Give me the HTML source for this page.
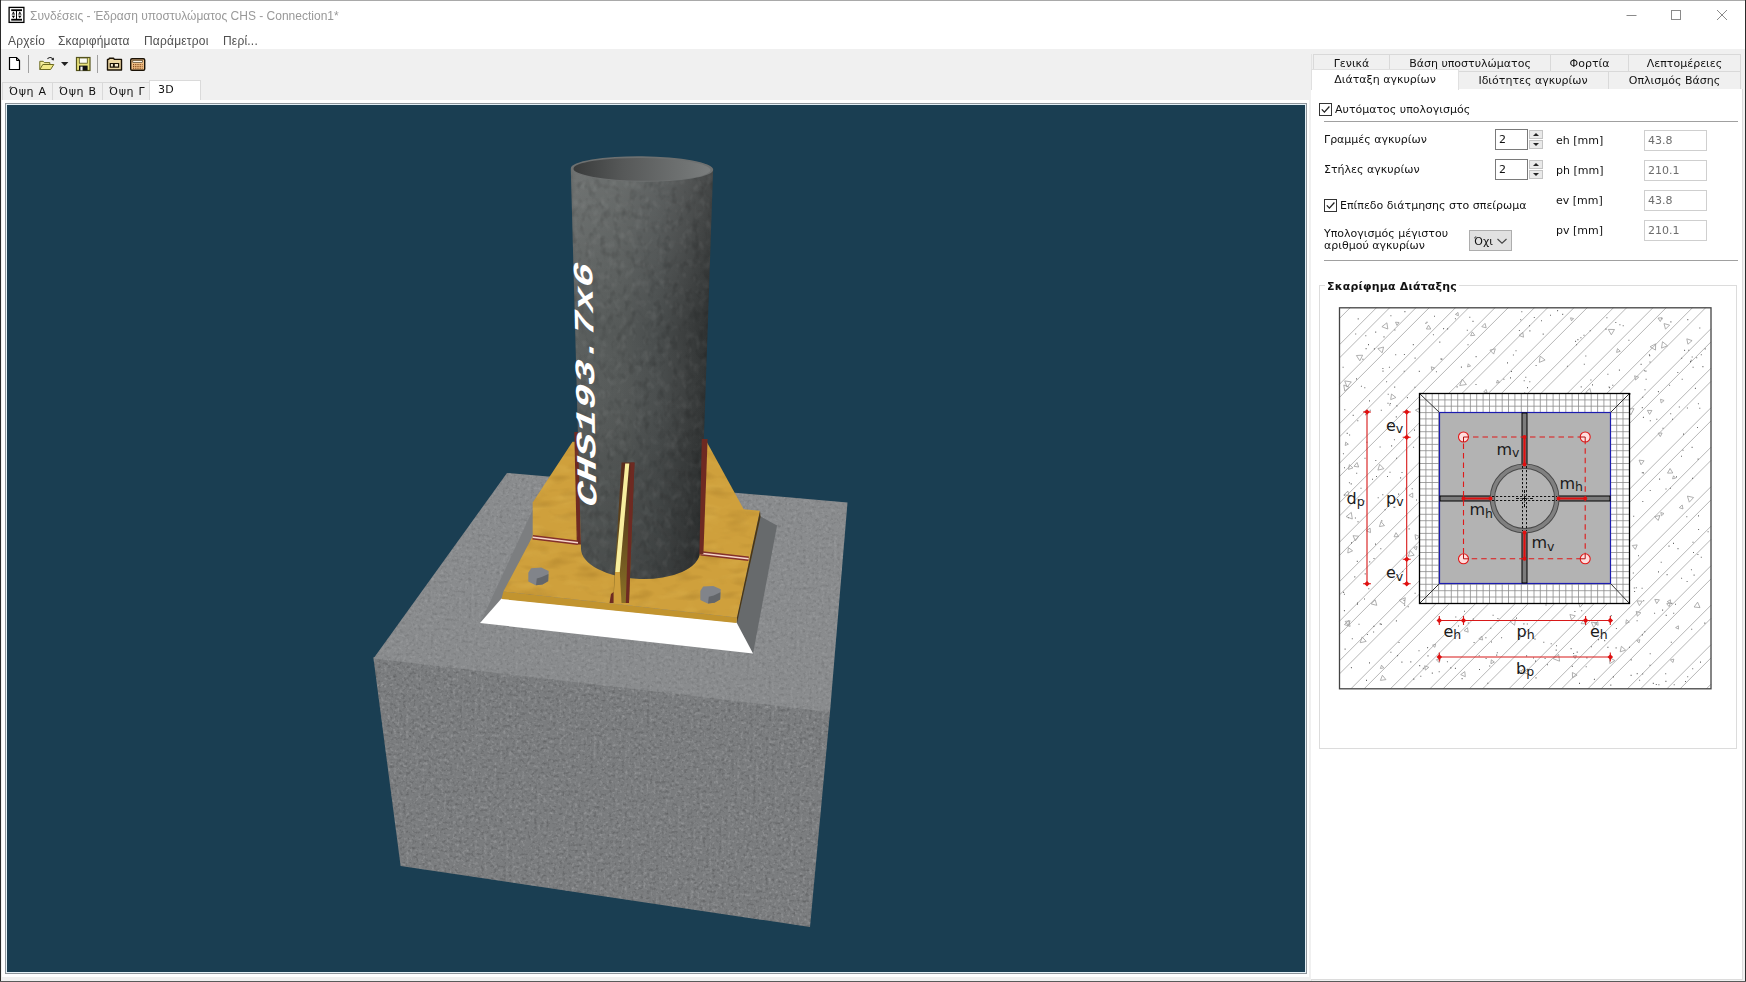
<!DOCTYPE html>
<html lang="el"><head><meta charset="utf-8"><title>Συνδέσεις</title>
<style>
html,body{margin:0;padding:0}
body{width:1746px;height:982px;overflow:hidden;position:relative;background:#f0f0f0;
 font-family:"DejaVu Sans","Liberation Sans",sans-serif;font-size:11px;color:#111}
.abs{position:absolute}
#win-top{position:absolute;left:0;top:0;width:1746px;height:49px;background:#fff}
#bt{position:absolute;left:0;top:0;width:1746px;height:1px;background:#a9a9a9}
#bl{position:absolute;left:0;top:0;width:1px;height:982px;background:#2b2b2b}
#br{position:absolute;left:1745px;top:0;width:1px;height:982px;background:#2b2b2b}
#bb{position:absolute;left:0;top:981px;width:1746px;height:1px;background:#5a5a5a}
#title{position:absolute;left:30px;top:9px;font-family:"Liberation Sans","DejaVu Sans",sans-serif;font-size:12px;line-height:14px;color:#999;white-space:nowrap;letter-spacing:0}
.menu{position:absolute;top:34px;font-family:"Liberation Sans","DejaVu Sans",sans-serif;font-size:12px;line-height:14px;color:#505050;white-space:nowrap;letter-spacing:0.2px}
.tsep{position:absolute;top:55px;width:1px;height:18px;background:#a0a0a0}
.ltab{position:absolute;top:82px;height:18px;box-sizing:border-box;border:1px solid #d9d9d9;border-bottom:none;background:#f0f0f0;font-size:11px;line-height:16px;white-space:nowrap;padding:1px 0 0 6px;letter-spacing:0.7px}
.ltab.sel{top:80px;height:20px;background:#fff;border-color:#dadada;line-height:17px;padding-top:0}
#lpage{position:absolute;left:2px;top:100px;width:1307px;height:877px;background:#fff}
#view{position:absolute;left:5px;top:103px;width:1302px;height:871px;box-sizing:border-box;border:1px solid #8f969c;background:#e4f0f6}
#view svg{position:absolute;left:1px;top:1px}
/* right panel */
#rpage{position:absolute;left:1311px;top:89px;width:432px;height:891px;background:#fff}
.rtab{position:absolute;height:18px;box-sizing:border-box;border:1px solid #d9d9d9;border-bottom:none;background:#f0f0f0;font-size:11px;line-height:16px;text-align:center;white-space:nowrap}
.lbl{position:absolute;white-space:nowrap;font-size:11px;line-height:13px}
.hr{position:absolute;left:1324px;width:414px;height:1px;background:#a0a0a0}
.spin{position:absolute;left:1495px;width:33px;height:21px;box-sizing:border-box;border:1px solid #7a7a7a;background:#fff;font-size:11px;line-height:18px;padding:1px 0 0 3px}
.sbtn{position:absolute;left:1529px;width:14px;height:9px;box-sizing:border-box;border:1px solid #c3c3c3;background:#e9e9e9}
.sbtn i{position:absolute;left:3px;top:2px;width:0;height:0;border-left:3px solid transparent;border-right:3px solid transparent}
.sbtn.up i{border-bottom:3px solid #222}
.sbtn.dn i{border-top:3px solid #222}
.ro{position:absolute;left:1644px;width:63px;height:21px;box-sizing:border-box;border:1px solid #cfcfcf;background:#fff;color:#6d6d6d;font-size:11px;line-height:18px;padding:1px 0 0 3px}
.cb{position:absolute;width:13px;height:13px;box-sizing:border-box;border:1px solid #333;background:#fff}
.cb svg{position:absolute;left:0;top:0}

#title,.menu,.ltab,.rtab,.lbl,.spin,.ro,.combo{will-change:transform}

</style></head><body>
<div id="win-top"></div>
<!-- app icon -->
<svg class="abs" style="left:8px;top:6px" width="18" height="18" viewBox="0 0 18 18">
 <rect x="1.1" y="1.4" width="14.8" height="15" fill="#fff" stroke="#000" stroke-width="1.3"/>
 <rect x="3.2" y="3.3" width="10.8" height="1.8" fill="#000"/>
 <rect x="3.2" y="12.8" width="10.8" height="1.8" fill="#000"/>
 <rect x="8" y="5" width="1" height="8" fill="#000"/>
 <path d="M5.4 5.6l1.5 2.2h-3zM5.4 12.2l1.5-2.2h-3zM11.8 5.6l1.5 2.2h-3zM11.8 12.2l1.5-2.2h-3z" fill="#000"/>
 <path d="M3.7 8.9h3.3M10.2 8.9h3.3" stroke="#000" stroke-width="0.8"/>
</svg>
<div id="title">Συνδέσεις - Έδραση υποστυλώματος CHS - Connection1*</div>
<!-- window buttons -->
<svg class="abs" style="left:1610px;top:0" width="136" height="30" viewBox="0 0 136 30">
 <path d="M16.5 15.5h10" stroke="#8a8a8a" stroke-width="1" fill="none"/>
 <rect x="61.5" y="10.5" width="9" height="9" stroke="#8a8a8a" stroke-width="1" fill="none"/>
 <path d="M107 10l10 10M117 10l-10 10" stroke="#8a8a8a" stroke-width="1" fill="none"/>
</svg>
<div class="menu" style="left:8px">Αρχείο</div>
<div class="menu" style="left:58px">Σκαριφήματα</div>
<div class="menu" style="left:144px">Παράμετροι</div>
<div class="menu" style="left:223px">Περί...</div>
<!-- toolbar -->
<svg class="abs" style="left:0;top:52px" width="160" height="24" viewBox="0 52 160 24">
 <!-- new -->
 <path d="M9.5 57.5h7l3 3v9h-10z" fill="#fff" stroke="#000" stroke-width="1.2"/>
 <path d="M16.5 57.5v3h3" fill="none" stroke="#000" stroke-width="1"/>
 <!-- open -->
 <path d="M39.8 69.5v-8.2h3.4l1.2 1.3h5.4v2" fill="#f4ee9a" stroke="#6b6a20" stroke-width="1"/>
 <path d="M39.8 69.5l3-5h11l-3.2 5z" fill="#f1e987" stroke="#6b6a20" stroke-width="1"/>
 <path d="M47.5 58.8c1.5-1.8 4-1.8 5.2 0.3" fill="none" stroke="#222" stroke-width="1.1"/>
 <path d="M51.2 59.8l2.6 0.6 0.2-2.8z" fill="#222"/>
 <!-- dropdown arrow -->
 <path d="M61 62h7.4l-3.7 4z" fill="#222"/>
 <!-- save -->
 <rect x="76.5" y="57.5" width="13.5" height="13" fill="#e9e27c" stroke="#55541c" stroke-width="1.2"/>
 <rect x="79.3" y="58" width="8" height="5.2" fill="#fbfbf3" stroke="#55541c" stroke-width="0.8"/>
 <rect x="79" y="65.6" width="8.6" height="4.9" fill="#111"/>
 <rect x="80.4" y="66.6" width="2.2" height="3.9" fill="#f4f4f4"/>
 <!-- folder db -->
 <path d="M107.5 70v-10.6h1.2l0.8-1.2h4l0.8 1.2h7.2v10.6z" fill="#ecd6a2" stroke="#1a1206" stroke-width="1.4" stroke-linejoin="round"/>
 <path d="M110.3 63.5h3.2v3.6h-3.2zM114.2 63.5h4.4v3.6h-4.4z" fill="#f6ead0" stroke="#1a1206" stroke-width="1.2"/>
 <!-- calculator -->
 <rect x="130.7" y="58.8" width="14" height="11.5" rx="1.3" fill="#f0bf86" stroke="#1a1206" stroke-width="1.4"/>
 <rect x="132.8" y="60.6" width="9.8" height="2" fill="#fdf4e6" stroke="#3a2a10" stroke-width="0.6"/>
 <path d="M133 64.6h9.6M133 66.4h9.6M133 68.2h9.6" stroke="#7a3d10" stroke-width="1" stroke-dasharray="1.2 1"/>
</svg>
<div class="tsep" style="left:28px"></div>
<div class="tsep" style="left:97px"></div>
<!-- left tabs -->
<div id="lpage"></div>
<div class="ltab" style="left:2px;width:51px">Όψη Α</div>
<div class="ltab" style="left:52px;width:51px">Όψη Β</div>
<div class="ltab" style="left:102px;width:48px">Όψη Γ</div>
<div class="ltab sel" style="left:149px;width:52px;padding-left:8px;letter-spacing:0.2px">3D</div>

<div id="view">
<svg width="1298" height="867" viewBox="7 105 1298 867">
<defs>
 <linearGradient id="cyl" x1="571" y1="0" x2="713" y2="0" gradientUnits="userSpaceOnUse">
  <stop offset="0" stop-color="#525655"/>
  <stop offset="0.04" stop-color="#5b5f5e"/>
  <stop offset="0.35" stop-color="#545857"/>
  <stop offset="0.6" stop-color="#494d4d"/>
  <stop offset="0.8" stop-color="#3c3f3f"/>
  <stop offset="0.93" stop-color="#313434"/>
  <stop offset="1" stop-color="#292c2c"/>
 </linearGradient>
 <linearGradient id="cylv" x1="0" y1="170" x2="0" y2="580" gradientUnits="userSpaceOnUse">
  <stop offset="0" stop-color="#fff" stop-opacity="0.13"/>
  <stop offset="0.4" stop-color="#fff" stop-opacity="0"/>
  <stop offset="0.7" stop-color="#000" stop-opacity="0.06"/><stop offset="1" stop-color="#000" stop-opacity="0.16"/>
 </linearGradient>
 <linearGradient id="cin" x1="575" y1="0" x2="710" y2="0" gradientUnits="userSpaceOnUse">
  <stop offset="0" stop-color="#3a3c3c"/>
  <stop offset="0.35" stop-color="#565858"/>
  <stop offset="0.8" stop-color="#6f7272"/>
  <stop offset="1" stop-color="#7b7e7e"/>
 </linearGradient>
 <linearGradient id="weld" x1="0" y1="0" x2="0" y2="1">
  <stop offset="0" stop-color="#7a2a20"/><stop offset="0.3" stop-color="#8a3428"/>
  <stop offset="0.42" stop-color="#f8ddd2"/><stop offset="0.6" stop-color="#f8ddd2"/>
  <stop offset="0.72" stop-color="#8a3428"/><stop offset="1" stop-color="#7a2a20"/>
 </linearGradient>
 <filter id="nzc" x="0" y="0" width="100%" height="100%" color-interpolation-filters="sRGB">
  <feTurbulence type="fractalNoise" baseFrequency="0.32" numOctaves="2" seed="3" result="n"/>
  <feColorMatrix in="n" type="matrix" values="0 0 0 0 1  0 0 0 0 1  0 0 0 0 1  0.9 0 0 0 -0.45" result="l"/>
  <feColorMatrix in="n" type="matrix" values="0 0 0 0 0  0 0 0 0 0  0 0 0 0 0  0 -0.9 0 0 0.45" result="d"/>
  <feMerge result="m"><feMergeNode in="l"/><feMergeNode in="d"/></feMerge>
  <feComposite operator="in" in="m" in2="SourceGraphic"/>
 </filter>
 <filter id="nzb" x="0" y="0" width="100%" height="100%" color-interpolation-filters="sRGB">
  <feTurbulence type="fractalNoise" baseFrequency="0.14 0.1" numOctaves="2" seed="11" result="n"/>
  <feColorMatrix in="n" type="matrix" values="0 0 0 0 1  0 0 0 0 1  0 0 0 0 1  0.18 0 0 0 -0.09" result="l"/>
  <feColorMatrix in="n" type="matrix" values="0 0 0 0 0  0 0 0 0 0  0 0 0 0 0  0 -0.38 0 0 0.19" result="d"/>
  <feMerge result="m"><feMergeNode in="l"/><feMergeNode in="d"/></feMerge>
  <feComposite operator="in" in="m" in2="SourceGraphic"/>
 </filter>
 <filter id="nzg" x="0" y="0" width="100%" height="100%" color-interpolation-filters="sRGB">
  <feTurbulence type="fractalNoise" baseFrequency="0.04 0.1" numOctaves="2" seed="5" result="n"/>
  <feColorMatrix in="n" type="matrix" values="0 0 0 0 1  0 0 0 0 0.9  0 0 0 0 0.5  0.3 0 0 0 -0.15" result="l"/>
  <feColorMatrix in="n" type="matrix" values="0 0 0 0 0.35  0 0 0 0 0.2  0 0 0 0 0  0 -0.42 0 0 0.21" result="d"/>
  <feMerge result="m"><feMergeNode in="l"/><feMergeNode in="d"/></feMerge>
  <feComposite operator="in" in="m" in2="SourceGraphic"/>
 </filter>
 <linearGradient id="fs" x1="0" y1="462" x2="0" y2="603" gradientUnits="userSpaceOnUse">
  <stop offset="0" stop-color="#5a2a1c"/><stop offset="0.4" stop-color="#5c431c"/><stop offset="1" stop-color="#8a7026"/>
 </linearGradient>
</defs>
<rect x="7" y="105" width="1298" height="867" fill="#1a3e52"/>
<!-- concrete block -->
<polygon points="373.5,657 830,710.5 830,712 810,927 400.6,866 373.5,658.5" fill="#7b7d7f"/>
<polygon points="507,473 847.5,502.5 830,712 373.5,658.5" fill="#8a8c8e"/>
<g filter="url(#nzc)"><polygon points="507,473 847.5,502.5 830,712 373.5,658.5" fill="#fff" opacity="0.35"/><polygon points="373.5,658.5 830,712 810,927 400.6,866" fill="#fff" opacity="0.55"/></g>
<!-- grout -->
<polygon points="480,623.5 542,490 556,492 502.5,599" fill="#7c7e80"/>
<polygon points="760,516 777,525.6 753,653.6 736.5,622.5" fill="#676a6c"/>
<polygon points="501.5,598.5 736.5,622.5 753,653.6 480,623" fill="#ffffff"/>
<!-- base plate -->
<polygon points="556,492 760,510.8 737,617.4 503.4,591.6" fill="#cfa03c"/>
<polygon points="503.4,591.6 737,617.4 736.5,623 501.5,599" fill="#c2942f"/>
<polygon points="760,510.8 760.5,517 737,623 737,617.4" fill="#4a3614"/>
<g filter="url(#nzg)"><polygon points="556,492 760,510.8 737,617.4 503.4,591.6" fill="#fff"/></g>
<!-- left stiffener -->
<polygon points="572.5,441.7 532.7,502.6 532.7,536.6 578,543 578,441.7" fill="#cfa03c"/>
<polygon points="574.3,432 578.6,432 581,544.5 576.8,544.5" fill="#6e2a22"/>
<!-- right stiffener -->
<polygon points="706,440.5 750,520.8 748.4,558.6 701,553.5 703,440.5" fill="#cfa03c"/>
<g filter="url(#nzg)"><polygon points="572.5,441.7 532.7,502.6 532.7,536.6 578,543 578,441.7" fill="#fff"/><polygon points="706,440.5 750,520.8 748.4,558.6 701,553.5 703,440.5" fill="#fff"/></g>
<path d="M532.7 537.2L578 542.8" stroke="#83302a" stroke-width="4.6" fill="none"/><path d="M532.7 537.2L578 542.8" stroke="#f6d6cc" stroke-width="1.5" fill="none"/>
<path d="M700.5 553.2L748.6 558.7" stroke="#83302a" stroke-width="4.6" fill="none"/><path d="M700.5 553.2L748.6 558.7" stroke="#f6d6cc" stroke-width="1.5" fill="none"/>
<!-- cylinder -->
<path d="M570.8 169 L581 548 A59.5 29 2 0 0 700 552 L713.1 170.5 A71.2 12.6 0 0 0 570.8 169Z" fill="url(#cyl)"/>
<path d="M570.8 169 L581 548 A59.5 29 2 0 0 700 552 L713.1 170.5 A71.2 12.6 0 0 0 570.8 169Z" fill="url(#cylv)"/>
<g filter="url(#nzb)"><path d="M570.8 169 L581 548 A59.5 29 2 0 0 700 552 L713.1 170.5 A71.2 12.6 0 0 0 570.8 169Z" fill="#fff"/></g>
<ellipse cx="642" cy="169" rx="71.2" ry="12.8" fill="#6d7070" transform="rotate(0.6 642 169)"/>
<ellipse cx="642" cy="169.4" rx="68.5" ry="11.4" fill="url(#cin)" transform="rotate(0.6 642 169)"/>
<polygon points="701.8,439 707.6,439 703.4,554 699.4,554" fill="#6e2a22"/>
<!-- label -->
<text transform="translate(596.4,507.5) rotate(-91.0) skewX(-10) scale(1,0.685)" font-family="'Liberation Mono','DejaVu Sans Mono',monospace" font-weight="bold" font-style="italic" font-size="40.6" fill="#fff">CHS193.7x6</text>
<!-- front stiffener -->
<polygon points="621.5,462.5 634.5,462.5 629,603 613,603" fill="url(#fs)"/>
<polygon points="630.5,462.5 634.5,462.5 629,603 625.8,603" fill="#6e2a22"/>
<polygon points="625.2,463.5 629.3,463.5 619.8,572 615.2,572" fill="#f7ee9e"/>
<polygon points="615.2,572 619.8,572 621.5,603 613.2,603" fill="#cfa03c"/>
<polygon points="611,594 613.5,592 613.5,603 609.5,603" fill="#6e2a22"/>
<!-- bolts -->
<polygon points="700.3,591.0 703.1,586.5 713.3,585.9 720.7,589.3 720.2,599.1 714.5,602.8 707.6,603.6 700.3,599.9" fill="#81848a"/><polygon points="708.8,596.7 713.7,595.4 720.4,592.2 720.2,599.5 714.5,602.8 708.0,603.5" fill="#63666a"/>
<polygon points="528.3,572.7 531.1,568.2 541.3,567.6 548.7,571.0 548.2,580.8 542.5,584.5 535.6,585.3 528.3,581.6" fill="#81848a"/><polygon points="536.8,578.4 541.7,577.1 548.4,573.9 548.2,581.2 542.5,584.5 536.0,585.2" fill="#63666a"/>
</svg>

</div>
<!-- right panel -->
<div class="abs" style="left:1311px;top:54px;width:1px;height:927px;background:#e3e3e3"></div>
<div id="rpage"></div>
<div class="abs" style="left:1742px;top:89px;width:1px;height:891px;background:#dcdcdc"></div>
<div class="abs" style="left:1311px;top:979px;width:432px;height:1px;background:#dcdcdc"></div>
<div class="rtab" style="left:1313px;top:54px;width:77px;padding-top:1px">Γενικά</div>
<div class="rtab" style="left:1389px;top:54px;width:162px;padding-top:1px">Βάση υποστυλώματος</div>
<div class="rtab" style="left:1550px;top:54px;width:79px;padding-top:1px">Φορτία</div>
<div class="rtab" style="left:1628px;top:54px;width:113px;padding-top:1px">Λεπτομέρειες</div>
<div class="rtab" style="left:1457px;top:71px;width:152px;padding-top:1px">Ιδιότητες αγκυρίων</div>
<div class="rtab" style="left:1608px;top:71px;width:133px;padding-top:1px">Οπλισμός Βάσης</div>
<div class="rtab" style="left:1311px;top:69px;width:148px;height:21px;background:#fff;padding-top:2px;border-color:#e0e0e0">Διάταξη αγκυρίων</div>

<div class="cb" style="left:1319px;top:103px"><svg width="11" height="11" viewBox="0 0 11 11"><path d="M1.8 5.4l2.6 2.7 5-5.6" fill="none" stroke="#222" stroke-width="1.3"/></svg></div>
<div class="lbl" style="left:1335px;top:103px">Αυτόματος υπολογισμός</div>
<div class="hr" style="top:121px"></div>

<div class="lbl" style="left:1324px;top:133px">Γραμμές αγκυρίων</div>
<div class="spin" style="top:129px">2</div>
<div class="sbtn up" style="top:130px"><i></i></div>
<div class="sbtn dn" style="top:140px"><i></i></div>
<div class="lbl" style="left:1556px;top:134px">eh [mm]</div>
<div class="ro" style="top:130px">43.8</div>

<div class="lbl" style="left:1324px;top:163px">Στήλες αγκυρίων</div>
<div class="spin" style="top:159px">2</div>
<div class="sbtn up" style="top:160px"><i></i></div>
<div class="sbtn dn" style="top:170px"><i></i></div>
<div class="lbl" style="left:1556px;top:164px">ph [mm]</div>
<div class="ro" style="top:160px">210.1</div>

<div class="cb" style="left:1324px;top:199px"><svg width="11" height="11" viewBox="0 0 11 11"><path d="M1.8 5.4l2.6 2.7 5-5.6" fill="none" stroke="#222" stroke-width="1.3"/></svg></div>
<div class="lbl" style="left:1340px;top:199px">Επίπεδο διάτμησης στο σπείρωμα</div>
<div class="lbl" style="left:1556px;top:194px">ev [mm]</div>
<div class="ro" style="top:190px">43.8</div>

<div class="lbl" style="left:1324px;top:228px;line-height:12px">Υπολογισμός μέγιστου<br>αριθμού αγκυρίων</div>
<div class="abs combo" style="left:1469px;top:230px;width:43px;height:21px;box-sizing:border-box;border:1px solid #adadad;background:#e1e1e1;font-size:11px;line-height:18px;padding:2px 0 0 4px">Όχι</div>
<svg class="abs" style="left:1496px;top:236px" width="12" height="10" viewBox="0 0 12 10"><path d="M1.5 3l4.5 4.2 4.5-4.2" fill="none" stroke="#444" stroke-width="1.1"/></svg>
<div class="lbl" style="left:1556px;top:224px">pv [mm]</div>
<div class="ro" style="top:220px">210.1</div>
<div class="hr" style="top:260px"></div>

<!-- group box -->
<div class="abs" style="left:1319px;top:285px;width:418px;height:464px;box-sizing:border-box;border:1px solid #dcdcdc"></div>
<div class="lbl" style="left:1325px;top:280px;font-weight:bold;background:#fff;padding:0 2px;letter-spacing:0.18px">Σκαρίφημα Διάταξης</div>

<svg class="abs" style="left:1330px;top:300px" width="390" height="400" viewBox="1330 300 390 400" font-family="'DejaVu Sans','Liberation Sans',sans-serif">
 <rect x="1339.5" y="307.5" width="371.5" height="381.5" fill="#fff"/>
 <path d="M1350.4 307.5L1339.5 318.4M1376.7 307.5L1339.5 344.7M1389.9 307.5L1339.5 357.9M1416.2 307.5L1339.5 384.2M1429.4 307.5L1339.5 397.4M1455.7 307.5L1339.5 423.7M1468.9 307.5L1339.5 436.9M1495.2 307.5L1339.5 463.2M1508.4 307.5L1339.5 476.4M1534.7 307.5L1339.5 502.7M1547.9 307.5L1339.5 515.9M1574.2 307.5L1339.5 542.2M1587.4 307.5L1339.5 555.4M1613.7 307.5L1339.5 581.7M1626.9 307.5L1339.5 594.9M1653.2 307.5L1339.5 621.2M1666.4 307.5L1339.5 634.4M1692.7 307.5L1339.5 660.7M1705.9 307.5L1339.5 673.9M1350.7 689.0L1711.0 328.7M1363.9 689.0L1711.0 341.9M1390.2 689.0L1711.0 368.2M1403.4 689.0L1711.0 381.4M1429.7 689.0L1711.0 407.7M1442.9 689.0L1711.0 420.9M1469.2 689.0L1711.0 447.2M1482.4 689.0L1711.0 460.4M1508.7 689.0L1711.0 486.7M1521.9 689.0L1711.0 499.9M1548.2 689.0L1711.0 526.2M1561.4 689.0L1711.0 539.4M1587.7 689.0L1711.0 565.7M1600.9 689.0L1711.0 578.9M1627.2 689.0L1711.0 605.2M1640.4 689.0L1711.0 618.4M1666.7 689.0L1711.0 644.7M1679.9 689.0L1711.0 657.9M1706.2 689.0L1711.0 684.2" stroke="#a3a3a3" stroke-width="0.8" fill="none"/>
<path d="M1460.9 367.1h1M1580.4 337.7h1M1538.4 447.8h1M1363.7 501.0h1M1356.2 473.3h1M1368.0 344.6h1M1497.7 621.0h1M1387.7 394.3h1M1571.8 666.4h1M1553.4 459.5h1M1699.3 328.0h1M1656.3 419.2h1M1395.2 354.7h1M1455.3 617.0h1M1408.6 528.9h1M1576.0 450.3h1M1542.7 334.1h1M1364.3 387.8h1M1591.2 471.1h1M1457.3 530.4h1M1508.1 423.1h1M1632.8 573.0h1M1431.7 526.2h1M1534.5 639.1h1M1609.1 418.6h1M1700.8 354.8h1M1495.3 594.8h1M1398.1 494.1h1M1356.8 561.4h1M1622.0 525.7h1M1662.5 428.3h1M1596.6 533.7h1M1554.5 481.8h1M1649.5 665.2h1M1515.8 559.9h1M1364.7 573.9h1M1579.0 683.4h1M1642.9 417.4h1M1483.5 561.6h1M1350.7 483.9h1M1403.9 354.5h1M1364.0 599.0h1M1389.8 403.5h1M1485.4 637.7h1M1372.0 479.2h1M1543.3 642.2h1M1641.9 634.9h1M1444.3 466.4h1M1473.6 642.5h1M1692.6 367.2h1M1406.9 397.6h1M1427.8 492.6h1M1557.8 409.2h1M1344.0 467.8h1M1477.5 523.2h1M1690.9 569.8h1M1530.9 542.4h1M1589.7 330.8h1M1671.3 603.4h1M1662.1 610.1h1M1485.9 460.3h1M1380.3 548.7h1M1365.3 335.8h1M1418.8 371.4h1M1466.8 330.2h1M1342.6 367.3h1M1379.6 447.0h1M1351.8 638.8h1M1566.9 366.3h1M1434.7 440.9h1M1475.6 356.6h1M1652.8 683.4h1M1512.8 492.2h1M1373.9 348.9h1M1467.7 409.9h1M1645.4 371.1h1M1350.9 667.6h1M1535.6 365.5h1M1541.0 320.7h1M1535.5 677.9h1M1658.0 571.9h1M1437.9 448.2h1M1403.6 600.4h1M1537.2 603.0h1M1463.0 394.3h1M1639.1 680.3h1M1654.1 613.2h1M1641.6 588.3h1M1425.4 504.9h1M1472.5 321.4h1M1352.7 415.4h1M1437.2 570.5h1M1692.1 478.4h1M1685.0 681.5h1M1691.6 447.4h1M1423.1 395.7h1M1414.4 387.2h1M1570.6 648.6h1M1649.7 490.5h1M1581.2 610.8h1M1373.5 558.5h1M1675.0 604.3h1M1616.7 490.0h1M1407.7 606.8h1M1464.0 611.2h1M1697.6 459.1h1M1489.2 666.0h1M1607.4 374.3h1M1388.9 367.3h1M1673.2 613.3h1M1395.9 620.9h1M1700.8 557.3h1M1470.6 516.5h1M1390.4 315.8h1M1697.4 554.5h1M1535.0 661.1h1M1501.1 637.8h1M1644.5 389.7h1M1434.5 420.5h1M1430.4 530.7h1M1437.3 467.8h1M1390.4 652.2h1M1471.8 482.5h1M1555.7 650.1h1M1496.2 655.1h1M1525.9 510.2h1M1533.8 317.5h1M1503.4 379.3h1M1343.9 610.6h1M1405.5 488.3h1M1607.6 519.5h1M1461.6 505.1h1M1545.5 605.0h1M1381.3 520.9h1M1433.3 414.5h1M1624.8 501.1h1M1547.8 595.9h1M1676.0 476.9h1M1566.4 500.3h1M1529.7 570.6h1M1507.8 510.7h1M1517.2 664.0h1M1598.1 639.6h1M1686.9 408.0h1M1547.0 664.7h1M1649.5 362.0h1M1387.0 476.5h1M1369.0 400.9h1M1369.2 561.9h1M1629.0 647.3h1M1399.0 579.4h1M1583.8 364.2h1M1665.2 673.8h1M1422.8 668.2h1M1488.1 493.5h1M1704.3 623.1h1M1401.5 472.5h1M1531.0 437.8h1M1414.0 430.1h1M1606.4 317.8h1M1545.0 475.9h1M1349.1 435.0h1M1570.5 502.9h1M1366.0 680.4h1M1630.6 675.4h1M1380.8 410.2h1M1357.0 603.0h1M1441.3 359.1h1M1496.8 652.7h1M1641.8 407.6h1M1397.1 655.6h1M1551.1 573.5h1M1375.2 332.1h1M1594.0 470.2h1M1369.0 662.9h1M1574.4 611.5h1M1373.1 632.0h1M1366.9 634.5h1M1508.4 437.9h1M1544.6 658.5h1M1440.4 359.0h1M1535.1 400.0h1M1382.5 371.1h1M1360.9 386.3h1M1456.5 425.0h1M1620.1 419.4h1M1525.3 377.3h1M1469.3 317.3h1M1434.0 316.3h1M1610.4 517.4h1M1411.7 488.8h1M1684.1 350.4h1M1641.8 472.8h1M1523.4 623.9h1M1486.2 500.8h1M1593.9 679.4h1M1467.8 623.0h1M1600.8 549.3h1M1490.4 441.0h1M1362.4 359.2h1M1368.3 588.7h1M1435.9 371.8h1M1373.4 626.4h1M1660.7 562.3h1M1445.5 401.5h1M1449.6 483.0h1M1400.1 477.9h1M1438.7 671.7h1M1698.0 515.9h1M1431.8 673.1h1M1455.6 444.4h1M1342.9 453.8h1M1516.0 499.3h1M1416.0 500.0h1M1344.3 409.7h1M1375.3 460.5h1M1357.7 318.9h1M1453.7 397.9h1M1556.5 509.2h1M1616.8 557.4h1M1604.2 640.6h1M1484.9 433.0h1M1702.4 366.6h1M1607.2 552.0h1M1358.5 624.2h1M1668.5 546.1h1M1610.7 615.5h1M1393.4 507.2h1M1526.8 624.0h1M1636.6 620.8h1M1556.0 645.8h1M1592.1 570.8h1M1426.5 322.2h1M1391.1 445.9h1M1380.8 624.4h1M1546.6 546.2h1M1571.4 566.1h1M1521.3 311.7h1M1634.1 591.5h1M1526.3 511.5h1M1583.5 335.3h1M1611.8 405.2h1M1369.7 410.2h1M1609.1 387.6h1M1612.9 676.9h1M1523.0 454.2h1M1517.6 567.2h1M1622.8 542.2h1M1577.4 339.6h1M1396.4 405.9h1M1614.1 424.8h1M1550.0 315.2h1M1364.7 411.4h1M1588.1 570.4h1M1589.5 419.7h1M1531.3 485.0h1M1512.9 355.0h1M1669.1 385.3h1M1700.0 662.1h1M1348.9 482.8h1M1642.2 674.0h1M1506.8 411.4h1M1419.2 665.6h1M1419.5 528.8h1M1394.3 507.3h1M1690.7 360.3h1M1642.3 501.5h1M1666.6 574.6h1M1427.1 647.6h1M1520.2 319.8h1M1343.8 495.1h1M1507.3 423.9h1M1393.9 439.7h1M1458.0 626.0h1M1343.1 592.4h1M1649.2 355.6h1M1681.1 578.2h1M1672.0 419.3h1M1478.5 458.0h1M1707.6 531.7h1M1474.3 471.2h1M1443.1 328.6h1M1379.7 623.9h1M1446.9 661.8h1M1433.6 410.3h1M1529.3 381.8h1M1479.0 669.5h1M1665.7 615.4h1M1573.1 653.5h1M1686.3 516.7h1M1605.5 329.1h1M1610.2 479.8h1M1617.6 552.5h1M1447.1 328.9h1M1681.2 358.3h1M1515.1 439.5h1M1451.3 588.0h1M1699.3 408.2h1M1582.3 423.5h1M1546.2 458.6h1M1403.7 371.2h1M1418.5 650.7h1M1524.2 393.1h1M1673.7 684.7h1M1507.0 362.9h1M1412.8 344.6h1M1467.5 344.7h1M1429.9 407.5h1M1550.7 643.7h1M1616.5 465.5h1M1493.8 507.3h1M1480.2 437.5h1M1365.2 414.7h1M1696.2 357.8h1M1526.5 546.9h1M1657.9 391.6h1M1441.6 403.8h1M1488.6 477.9h1M1691.2 629.2h1M1661.5 318.7h1M1354.3 576.9h1M1669.9 488.2h1M1557.1 310.6h1M1485.6 658.5h1M1644.3 631.7h1M1697.9 403.8h1M1382.4 368.5h1M1533.4 566.6h1M1686.6 581.5h1M1579.1 597.7h1M1509.7 517.6h1M1357.0 604.3h1M1427.5 655.9h1M1578.4 424.6h1M1389.3 405.0h1M1575.1 572.8h1M1383.5 336.9h1M1534.2 529.4h1M1484.3 394.5h1M1562.2 314.4h1M1452.7 483.5h1M1693.0 552.5h1M1665.5 489.0h1M1428.3 403.3h1M1693.6 575.1h1M1454.9 318.7h1M1524.6 563.8h1M1496.0 407.1h1M1586.4 657.9h1M1425.4 323.3h1M1466.1 468.4h1M1592.0 384.9h1M1633.8 588.0h1M1527.0 387.6h1M1697.0 427.5h1M1642.2 397.2h1M1423.4 596.1h1M1450.3 667.9h1M1523.7 380.8h1M1424.1 467.1h1M1585.7 666.8h1M1396.0 458.2h1M1420.3 676.3h1M1394.4 330.0h1M1364.5 458.2h1M1670.8 642.3h1M1610.3 685.1h1M1683.0 434.1h1M1410.3 661.9h1M1615.3 322.5h1M1585.3 452.7h1M1479.2 435.1h1M1404.4 311.6h1M1444.8 442.5h1M1691.7 357.0h1M1694.9 388.4h1M1472.8 619.0h1M1642.9 472.9h1M1360.5 488.3h1M1478.7 655.8h1M1413.1 447.3h1M1670.4 321.9h1M1492.6 615.3h1M1622.7 325.8h1M1355.2 334.0h1M1678.8 407.0h1M1615.6 647.9h1M1466.4 412.8h1M1692.5 542.2h1M1438.3 579.6h1M1458.2 414.0h1M1343.9 594.2h1M1677.5 548.6h1M1687.3 319.6h1M1428.0 488.9h1M1692.2 668.7h1M1483.8 404.8h1M1499.6 495.8h1M1681.7 379.2h1M1635.8 587.8h1M1643.2 600.7h1M1564.5 433.6h1M1459.3 446.4h1M1628.4 340.2h1M1414.6 593.2h1M1432.9 334.8h1M1354.9 518.0h1M1461.6 678.6h1M1665.4 681.4h1M1439.3 342.1h1M1377.7 497.7h1M1601.9 478.3h1M1428.1 467.0h1M1569.2 563.6h1M1615.9 628.5h1M1585.3 356.0h1M1649.8 420.8h1M1549.7 450.6h1M1612.3 385.3h1M1432.9 402.6h1M1398.5 642.5h1M1553.9 433.0h1M1487.3 683.2h1M1527.9 397.4h1M1638.0 555.8h1M1704.7 348.9h1M1516.0 618.1h1M1649.7 653.8h1M1357.3 420.8h1M1386.1 381.7h1M1698.1 529.5h1M1682.5 450.3h1M1659.1 479.1h1M1437.5 602.6h1M1688.2 350.2h1M1560.4 543.3h1M1422.0 449.0h1M1394.2 387.1h1M1435.7 535.6h1M1580.7 386.9h1M1346.7 433.4h1M1590.4 380.0h1M1456.6 386.9h1M1633.2 516.3h1M1365.6 348.6h1M1487.0 517.1h1M1576.1 344.7h1M1402.3 571.6h1M1492.3 416.9h1M1454.9 668.4h1M1456.7 523.2h1M1473.0 466.9h1M1658.4 684.7h1M1475.5 384.5h1M1608.6 387.0h1M1344.6 649.1h1M1497.4 618.5h1M1491.0 642.0h1M1511.0 371.5h1M1347.9 517.6h1M1576.7 652.1h1M1375.0 544.1h1M1478.0 499.9h1M1395.8 416.9h1M1533.0 658.0h1M1382.3 494.7h1M1636.7 673.6h1M1414.6 358.1h1M1687.2 676.8h1M1518.9 330.5h1M1681.0 456.2h1M1673.0 543.4h1M1643.9 370.7h1M1629.7 393.9h1M1490.3 628.3h1M1645.6 379.2h1M1422.2 460.6h1M1531.8 454.5h1M1387.5 403.3h1M1607.4 647.4h1M1357.5 521.7h1M1619.4 324.8h1M1648.9 354.7h1M1561.6 517.0h1M1571.7 425.5h1M1496.0 529.3h1M1498.1 557.9h1M1505.8 475.1h1M1351.0 542.9h1M1521.4 398.8h1M1621.6 603.4h1M1510.0 377.9h1M1515.5 350.7h1M1389.5 472.2h1M1376.0 476.5h1M1529.0 325.8h1M1575.1 341.4h1M1610.6 602.5h1M1529.4 330.9h1M1526.7 452.4h1M1690.0 361.6h1M1655.8 684.5h1M1610.1 616.5h1M1413.3 679.1h1M1522.3 669.7h1M1677.3 372.5h1M1630.7 659.9h1M1366.4 442.3h1M1618.9 370.1h1M1670.2 413.8h1M1640.6 364.4h1M1526.1 655.9h1M1418.6 409.2h1M1527.4 430.3h1M1356.0 378.9h1M1401.4 662.1h1M1590.9 646.7h1M1404.2 605.2h1M1384.6 509.8h1M1575.1 445.6h1" stroke="#555" stroke-width="1.1" fill="none" opacity="0.9"/>
<path d="M1659.9 515.5L1658.2 520.5L1654.6 516.6ZM1380.4 680.4L1382.4 675.3L1385.9 679.6ZM1627.1 408.9L1634.0 408.7L1630.8 414.8ZM1475.5 597.0L1471.5 594.3L1475.8 592.2ZM1611.3 334.8L1608.3 329.4L1614.5 329.5ZM1572.4 672.5L1577.1 675.1L1572.5 677.8ZM1458.4 315.7L1455.4 314.4L1458.0 312.4ZM1568.1 470.6L1566.1 475.2L1563.0 471.2ZM1395.9 397.5L1390.7 399.6L1391.5 394.0ZM1345.2 445.5L1345.7 442.1L1348.4 444.2ZM1426.6 530.9L1422.7 527.2L1427.8 525.7ZM1570.5 487.2L1568.3 490.1L1566.9 486.8ZM1431.3 366.8L1434.6 368.0L1431.9 370.3ZM1656.7 603.6L1654.8 599.4L1659.4 599.8ZM1347.8 553.0L1348.4 547.7L1352.6 550.8ZM1575.9 472.7L1579.8 478.1L1573.2 478.9ZM1432.5 645.2L1435.6 644.1L1434.9 647.3ZM1491.0 398.9L1492.1 402.1L1488.8 401.5ZM1352.3 519.0L1346.1 516.6L1351.3 512.4ZM1415.0 534.7L1419.7 536.5L1415.8 539.7ZM1635.5 380.0L1634.6 375.8L1638.7 377.2ZM1362.1 636.9L1366.2 641.4L1360.2 642.7ZM1344.4 624.6L1348.8 620.5L1350.1 626.4ZM1612.5 481.2L1608.5 480.7L1611.0 477.5ZM1428.5 325.2L1430.8 329.0L1426.4 329.0ZM1593.7 627.5L1591.3 622.2L1597.1 622.8ZM1540.0 473.2L1545.7 471.0L1544.8 477.0ZM1441.2 553.3L1436.6 548.2L1443.3 546.8ZM1660.3 321.5L1658.0 318.1L1662.1 317.7ZM1609.8 663.7L1609.6 657.8L1614.9 660.5ZM1662.1 433.0L1660.3 436.6L1658.1 433.2ZM1574.2 567.7L1569.7 571.1L1569.0 565.5ZM1515.4 619.5L1514.6 625.2L1510.0 621.6ZM1500.7 582.7L1499.9 577.4L1504.8 579.3ZM1422.9 541.3L1421.4 544.3L1419.5 541.4ZM1399.0 322.5L1397.0 325.4L1395.5 322.2ZM1470.6 366.1L1467.5 366.9L1468.3 363.8ZM1592.8 543.1L1596.1 547.9L1590.4 548.4ZM1370.1 528.1L1370.5 532.6L1366.4 530.8ZM1639.8 639.6L1639.1 642.9L1636.6 640.6ZM1673.0 662.5L1670.4 660.0L1673.8 659.1ZM1386.9 322.8L1387.8 329.0L1381.9 326.7ZM1571.5 619.8L1569.9 614.5L1575.3 615.8ZM1382.2 352.8L1377.8 348.6L1383.6 347.0ZM1459.5 471.1L1458.0 468.2L1461.2 468.4ZM1445.4 578.9L1445.0 574.4L1449.1 576.3ZM1687.4 496.1L1693.6 497.5L1689.3 502.2ZM1357.0 462.5L1358.7 467.0L1354.0 466.3ZM1470.1 575.4L1466.6 571.5L1471.7 570.5ZM1655.5 350.1L1650.1 346.8L1655.6 343.8ZM1349.4 387.3L1344.7 391.0L1343.8 385.0ZM1347.9 491.1L1349.0 496.0L1344.3 494.5ZM1412.7 493.0L1412.8 497.5L1408.9 495.3ZM1439.2 662.7L1436.3 659.7L1440.4 658.7ZM1594.2 495.1L1597.6 496.2L1594.9 498.6ZM1375.2 599.8L1376.8 605.3L1371.2 604.0ZM1567.9 445.8L1569.6 441.5L1572.5 445.2ZM1667.5 345.8L1661.5 348.1L1662.5 341.7ZM1415.4 410.2L1421.1 407.0L1421.1 413.5ZM1478.9 638.9L1481.7 636.1L1482.7 640.0ZM1533.4 588.0L1539.0 590.3L1534.2 594.0ZM1471.3 431.8L1471.0 435.5L1467.9 433.4ZM1580.2 587.0L1582.5 584.0L1583.9 587.5ZM1620.0 526.8L1622.6 524.4L1623.4 527.8ZM1661.2 403.0L1660.5 399.3L1664.1 400.5ZM1598.1 625.3L1594.7 623.7L1597.8 621.6ZM1435.6 436.0L1431.1 433.6L1435.4 430.9ZM1462.3 379.1L1466.4 384.5L1459.7 385.5ZM1380.4 668.5L1381.5 665.2L1383.8 667.8ZM1694.1 607.0L1697.6 602.2L1700.0 607.6ZM1416.2 549.9L1413.7 547.5L1417.1 546.5ZM1485.0 323.4L1486.2 327.8L1481.8 326.7ZM1590.3 498.2L1594.3 494.4L1595.6 499.7ZM1396.0 532.7L1398.6 536.6L1394.0 536.8ZM1670.1 468.5L1672.8 473.0L1667.5 473.1ZM1498.5 395.2L1496.8 400.8L1492.8 396.5ZM1620.6 567.5L1625.9 571.1L1620.1 573.8ZM1573.1 478.5L1577.3 479.7L1574.2 482.7ZM1379.7 464.3L1383.9 468.7L1377.9 470.1ZM1568.0 406.2L1571.2 402.7L1572.6 407.3ZM1570.7 462.5L1567.4 467.2L1565.0 462.1ZM1408.3 556.3L1410.3 550.6L1414.2 555.2ZM1518.8 671.2L1522.0 670.4L1521.1 673.5ZM1399.2 600.3L1405.3 597.7L1404.5 604.4ZM1381.0 521.7L1384.5 525.6L1379.4 526.6ZM1525.0 547.9L1530.8 545.6L1530.0 551.8ZM1491.3 659.8L1494.4 662.1L1490.9 663.7ZM1487.9 593.6L1485.0 595.7L1484.6 592.1ZM1470.6 335.7L1472.3 331.9L1474.8 335.3ZM1349.4 464.7L1352.9 467.9L1348.5 469.4ZM1471.3 408.7L1473.4 412.0L1469.5 412.2ZM1682.2 505.0L1683.0 508.9L1679.3 507.7ZM1486.0 389.4L1487.2 392.7L1483.7 392.1ZM1632.3 545.5L1637.2 544.9L1635.3 549.4ZM1424.6 665.8L1428.8 667.3L1425.4 670.1ZM1637.4 616.2L1636.2 611.4L1640.9 612.8ZM1539.3 362.4L1540.1 356.1L1545.1 360.0ZM1649.6 414.4L1647.4 410.4L1651.9 410.5ZM1497.5 380.0L1499.5 382.4L1496.5 383.0ZM1443.6 403.8L1447.0 401.2L1447.5 405.5ZM1496.6 550.2L1497.6 544.6L1501.9 548.3ZM1678.4 625.8L1678.5 629.1L1675.6 627.6ZM1670.4 599.8L1670.4 603.4L1667.2 601.7ZM1573.6 318.5L1571.5 320.8L1570.5 317.8ZM1581.3 407.0L1578.0 405.7L1580.7 403.5ZM1430.5 600.9L1426.5 599.0L1430.1 596.5ZM1670.4 603.1L1669.1 606.6L1666.7 603.7ZM1565.6 598.6L1563.5 603.9L1560.0 599.4ZM1626.4 619.7L1629.4 622.1L1625.8 623.5ZM1537.3 584.3L1535.9 588.9L1532.6 585.3ZM1545.4 412.5L1541.7 411.1L1544.7 408.5ZM1523.5 337.2L1519.0 335.4L1522.8 332.4ZM1523.1 494.3L1522.2 499.4L1518.2 496.0ZM1345.2 621.4L1350.1 620.8L1348.2 625.3ZM1581.1 623.7L1583.4 619.8L1585.6 623.7ZM1686.8 338.8L1692.1 340.6L1687.9 344.2ZM1358.7 536.2L1355.4 540.8L1353.0 535.7ZM1460.7 674.6L1464.8 671.6L1465.3 676.7ZM1664.0 323.6L1669.6 325.1L1665.5 329.2ZM1464.0 630.6L1467.5 627.7L1468.2 632.2ZM1531.3 597.6L1533.6 594.4L1535.2 598.0ZM1495.5 520.6L1494.0 514.5L1500.0 516.2ZM1641.0 464.8L1639.1 460.1L1644.1 460.8ZM1527.4 668.7L1528.8 674.1L1523.4 672.7ZM1461.7 428.8L1465.9 428.8L1463.8 432.5ZM1572.1 599.8L1574.2 602.3L1571.0 602.9ZM1661.5 515.7L1660.8 512.5L1664.0 513.5ZM1344.7 380.9L1351.3 381.9L1347.1 387.1ZM1577.8 601.0L1584.3 602.2L1580.1 607.2ZM1563.2 542.0L1569.0 542.4L1565.7 547.2ZM1585.8 392.5L1589.8 388.4L1591.3 393.9ZM1620.3 351.3L1616.6 352.4L1617.5 348.6ZM1620.2 651.8L1621.4 646.3L1625.6 650.1ZM1639.4 605.6L1637.0 600.9L1642.3 601.2ZM1451.2 469.6L1453.7 466.0L1455.5 469.9ZM1573.2 655.9L1576.5 655.6L1575.1 658.6ZM1356.4 355.5L1362.6 355.2L1359.8 360.8ZM1672.5 478.8L1673.6 475.8L1675.6 478.2ZM1553.2 658.7L1558.6 654.4L1559.6 661.2ZM1493.7 354.1L1489.9 350.1L1495.3 348.8Z" stroke="#9c9c9c" stroke-width="0.8" fill="none"/>
 <rect x="1339.5" y="307.8" width="371.5" height="381" fill="none" stroke="#444" stroke-width="1.3"/>
 <!-- grout -->
 <rect x="1419.5" y="393.5" width="210" height="210" fill="#fff"/>
 <path d="M1419.5 399.9H1629.5M1419.5 406.2H1629.5M1419.5 412.6H1629.5M1419.5 418.9H1629.5M1419.5 425.3H1629.5M1419.5 431.7H1629.5M1419.5 438.0H1629.5M1419.5 444.4H1629.5M1419.5 450.7H1629.5M1419.5 457.1H1629.5M1419.5 463.5H1629.5M1419.5 469.8H1629.5M1419.5 476.2H1629.5M1419.5 482.5H1629.5M1419.5 488.9H1629.5M1419.5 495.3H1629.5M1419.5 501.6H1629.5M1419.5 508.0H1629.5M1419.5 514.3H1629.5M1419.5 520.7H1629.5M1419.5 527.1H1629.5M1419.5 533.4H1629.5M1419.5 539.8H1629.5M1419.5 546.1H1629.5M1419.5 552.5H1629.5M1419.5 558.9H1629.5M1419.5 565.2H1629.5M1419.5 571.6H1629.5M1419.5 577.9H1629.5M1419.5 584.3H1629.5M1419.5 590.7H1629.5M1419.5 597.0H1629.5M1425.9 393.5V603.5M1432.2 393.5V603.5M1438.6 393.5V603.5M1444.9 393.5V603.5M1451.3 393.5V603.5M1457.7 393.5V603.5M1464.0 393.5V603.5M1470.4 393.5V603.5M1476.7 393.5V603.5M1483.1 393.5V603.5M1489.5 393.5V603.5M1495.8 393.5V603.5M1502.2 393.5V603.5M1508.5 393.5V603.5M1514.9 393.5V603.5M1521.3 393.5V603.5M1527.6 393.5V603.5M1534.0 393.5V603.5M1540.3 393.5V603.5M1546.7 393.5V603.5M1553.1 393.5V603.5M1559.4 393.5V603.5M1565.8 393.5V603.5M1572.1 393.5V603.5M1578.5 393.5V603.5M1584.9 393.5V603.5M1591.2 393.5V603.5M1597.6 393.5V603.5M1603.9 393.5V603.5M1610.3 393.5V603.5M1616.7 393.5V603.5M1623.0 393.5V603.5" stroke="#8c8c8c" stroke-width="0.8" fill="none"/>
 <path d="M1419.5 393.5L1439.5 412.5M1629.5 393.5L1610.5 412.5M1419.5 603.5L1439.5 583.5M1629.5 603.5L1610.5 583.5" stroke="#333" stroke-width="1" fill="none"/>
 <rect x="1419.5" y="393.5" width="210" height="210" fill="none" stroke="#000" stroke-width="1.3"/>
 <!-- plate -->
 <rect x="1439.5" y="412.5" width="171" height="171" fill="#b3b3b3" stroke="#1c1cb0" stroke-width="1.2"/>
 <!-- stiffeners -->
 <g fill="#7c7c7c" stroke="#000" stroke-width="1">
  <rect x="1522" y="413" width="5" height="52"/>
  <rect x="1522" y="532" width="5" height="51"/>
  <rect x="1440" y="496" width="51" height="5"/>
  <rect x="1558" y="496" width="52" height="5"/>
 </g>
 <!-- tube -->
 <circle cx="1524.6" cy="498.5" r="32.2" fill="none" stroke="#4a4a4a" stroke-width="5.4"/>
 <circle cx="1524.6" cy="498.5" r="32.2" fill="none" stroke="#808080" stroke-width="3.4"/>
 <!-- dashed inner lines -->
 <path d="M1522.5 466V531M1526.5 466V531M1492 496.5H1557M1492 500.5H1557" stroke="#000" stroke-width="0.9" stroke-dasharray="2.2 1.8" fill="none"/>
 <path d="M1524.5 490V507M1516 498.5H1533" stroke="#000" stroke-width="0.9" stroke-dasharray="3 1.5 1 1.5" fill="none"/>
 <!-- anchor dashed rect -->
 <rect x="1463.5" y="437" width="121.7" height="121.8" fill="none" stroke="#e01818" stroke-width="1.1" stroke-dasharray="5.5 4"/>
 <g fill="#ffdede" stroke="#e01818" stroke-width="1.1">
  <circle cx="1463.5" cy="437" r="5"/><circle cx="1585.2" cy="437" r="5"/>
  <circle cx="1463.5" cy="558.8" r="5"/><circle cx="1585.2" cy="558.8" r="5"/>
 </g>
 <path d="M1463.5 442V437H1468.5M1585.2 442V437H1580.2M1463.5 553.8V558.8H1468.5M1585.2 553.8V558.8H1580.2" stroke="#b01010" stroke-width="1" fill="none"/>
 <!-- m lines -->
 <path d="M1524.5 437V464.5M1524.5 532.5V558.8M1463.5 498.5H1490.5M1558.5 498.5H1585.2" stroke="#e01010" stroke-width="2.2" fill="none"/>
 <g fill="#e01010">
  <circle cx="1524.5" cy="437" r="2"/><circle cx="1524.5" cy="464.5" r="2"/><circle cx="1524.5" cy="532.5" r="2"/><circle cx="1524.5" cy="558.8" r="2"/>
  <circle cx="1463.5" cy="498.5" r="2"/><circle cx="1490.5" cy="498.5" r="2"/><circle cx="1558.5" cy="498.5" r="2"/><circle cx="1585.2" cy="498.5" r="2"/>
 </g>
 <!-- dimension lines -->
 <g stroke="#d81818" stroke-width="1.1" fill="none">
  <path d="M1367 412V583.7M1406.7 412V583.7"/>
  <path d="M1363 412h8M1363 583.7h8M1402.7 412h8M1402.7 437.2h8M1402.7 559.3h8M1402.7 583.7h8"/>
  <path d="M1439.3 620.5H1610.3M1439.3 657H1610.3"/>
  <path d="M1439.3 616v9M1463.5 616v9M1585.6 616v9M1610.3 616v9M1439.3 652.5v9M1610.3 652.5v9"/>
 </g>
 <path fill="#e01010" d="M1367.0 409.2l2.8 2.8-2.8 2.8-2.8-2.8zM1367.0 580.9l2.8 2.8-2.8 2.8-2.8-2.8zM1406.7 409.2l2.8 2.8-2.8 2.8-2.8-2.8zM1406.7 434.4l2.8 2.8-2.8 2.8-2.8-2.8zM1406.7 556.5l2.8 2.8-2.8 2.8-2.8-2.8zM1406.7 580.9l2.8 2.8-2.8 2.8-2.8-2.8zM1439.3 617.7l2.8 2.8-2.8 2.8-2.8-2.8zM1463.5 617.7l2.8 2.8-2.8 2.8-2.8-2.8zM1585.6 617.7l2.8 2.8-2.8 2.8-2.8-2.8zM1610.3 617.7l2.8 2.8-2.8 2.8-2.8-2.8zM1439.3 654.2l2.8 2.8-2.8 2.8-2.8-2.8zM1610.3 654.2l2.8 2.8-2.8 2.8-2.8-2.8z"/>
 <!-- labels -->
 <g font-size="16" fill="#1a1a1a">
  <text x="1346.5" y="503.7">d<tspan font-size="12.5" dy="2.5">p</tspan></text>
  <text x="1386" y="430.7">e<tspan font-size="12.5" dy="2.5">v</tspan></text>
  <text x="1386" y="503.7">p<tspan font-size="12.5" dy="2.5">v</tspan></text>
  <text x="1386" y="578">e<tspan font-size="12.5" dy="2.5">v</tspan></text>
  <text x="1496.5" y="454.8">m<tspan font-size="12.5" dy="2.5">v</tspan></text>
  <text x="1559.5" y="488.7">m<tspan font-size="12.5" dy="2.5">h</tspan></text>
  <text x="1469.5" y="515">m<tspan font-size="12.5" dy="2.5">h</tspan></text>
  <text x="1531.5" y="548.2">m<tspan font-size="12.5" dy="2.5">v</tspan></text>
  <text x="1443.5" y="636.6">e<tspan font-size="12.5" dy="2.5">h</tspan></text>
  <text x="1516.5" y="636.6">p<tspan font-size="12.5" dy="2.5">h</tspan></text>
  <text x="1590" y="636.6">e<tspan font-size="12.5" dy="2.5">h</tspan></text>
  <text x="1516" y="673.8">b<tspan font-size="12.5" dy="2.5">p</tspan></text>
 </g>
</svg>

<div id="bt"></div><div id="bl"></div><div id="br"></div><div id="bb"></div>

</body></html>
